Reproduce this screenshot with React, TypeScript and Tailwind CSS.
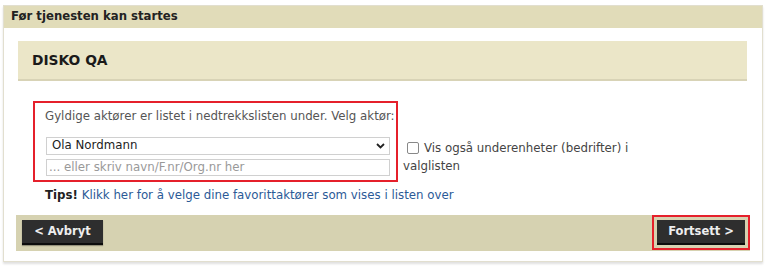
import React from "react";

export default function App() {
  const font = { fontFamily: '"DejaVu Sans", Verdana, sans-serif' };
  return (
    <div className="w-[768px] h-[270px] bg-white overflow-hidden" style={font}>
      <div className="ml-[3px] mt-[5px] w-[760px] h-[257px] border border-[#e2dfcf] shadow-[0_2px_2px_rgba(0,0,0,0.12)] bg-white">
        <div className="h-[22px] bg-[#e1dcb9] flex items-center pl-[7px] text-[11.7px] font-bold text-[#222]">
          Før tjenesten kan startes
        </div>
        <div className="pl-[14px] pr-[15px] pt-[13px]">
          <div className="h-[40px] bg-[#ebe6c8] border-b-2 border-[#d8d3b6] flex items-center pl-[14px] text-[13.8px] font-bold text-[#1a1a1a]">
            DISKO QA
          </div>
          <div className="flex pt-[20px] pl-[15px]">
            <div className="w-[365px] h-[81px] border-2 border-[#e5202b] pl-[10px] pr-[6px] pt-[6px]">
              <div className="text-[11.8px] leading-[14px] text-[#555] whitespace-nowrap">
                Gyldige aktører er listet i nedtrekkslisten under. Velg aktør:
              </div>
              <div className="mt-[14px] ml-[1px] w-[344px] h-[18px] border border-[#d0d0d0] bg-white flex items-center justify-between pl-[5px] pr-[4px] text-[11.8px] text-[#222]">
                <span>Ola Nordmann</span>
                <svg width="9" height="6" viewBox="0 0 9 6">
                  <path d="M1 1 L4.5 4.5 L8 1" fill="none" stroke="#222" strokeWidth="1.8" />
                </svg>
              </div>
              <div className="mt-[4px] ml-[1px] w-[344px] h-[17px] border border-[#d0d0d0] bg-white flex items-center pl-[2px] text-[11.8px] text-[#999]">
                ... eller skriv navn/F.nr/Org.nr her
              </div>
            </div>
            <div className="ml-[5px] mt-[38px] w-[250px] text-[11.8px] leading-[18px] text-[#444]">
              <span className="inline-block align-middle w-[12px] h-[12px] border border-[#888] rounded-[2px] bg-white ml-[4px] mr-[5px] -mt-[2px]"></span>
              Vis også underenheter (bedrifter) i valglisten
            </div>
          </div>
          <div className="pl-[27px] mt-[5px] text-[11.8px] text-[#2b5a97] whitespace-nowrap">
            <span className="font-bold text-[#222]">Tips!</span> Klikk her for å velge dine favorittaktører som vises i listen over
          </div>
          <div className="-ml-[2px] mt-[10px] w-[734px] h-[36px] bg-[#d6d2b1] flex items-center justify-between pl-[6px] pr-[6px]">
            <button className="w-[81px] h-[25px] bg-[#2e2e2e] border-b-2 border-[#0c0c0c] text-[#eee] text-[11.5px] font-bold shadow-[0_1px_1px_rgba(0,0,0,0.3)]">
              &lt; Avbryt
            </button>
            <div className="border-2 border-[#e5202b] p-[3px] -mr-[6px] bg-[#d6d2b1]">
              <button className="w-[88px] h-[25px] bg-[#2e2e2e] border-b-2 border-[#0c0c0c] text-[#eee] text-[11.5px] font-bold block">
                Fortsett &gt;
              </button>
            </div>
          </div>
        </div>
      </div>
    </div>
  );
}
